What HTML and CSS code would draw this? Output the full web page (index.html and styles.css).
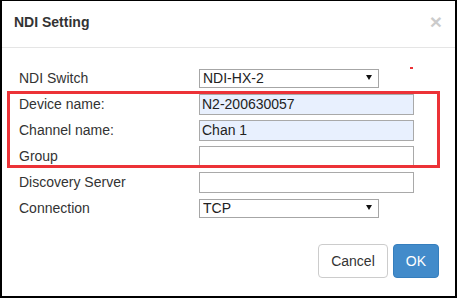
FILE: index.html
```html
<!DOCTYPE html>
<html>
<head>
<meta charset="utf-8">
<link rel="stylesheet" href="styles.css">
</head>
<body>
<div class="modal">
  <div class="modal-header">
    <button class="close" type="button">×</button>
    <h4 class="modal-title">NDI Setting</h4>
  </div>
  <div class="modal-body">
    <div class="form">
      <label class="lbl">NDI Switch</label>
      <div class="field"><div class="select-wrap"><select class="sel"><option>NDI-HX-2</option></select><span class="arrow"></span></div></div>
      <label class="lbl">Device name:</label>
      <div class="field"><input class="inp filled" type="text" value="N2-200630057"></div>
      <label class="lbl">Channel name:</label>
      <div class="field"><input class="inp filled" type="text" value="Chan 1"></div>
      <label class="lbl">Group</label>
      <div class="field"><input class="inp" type="text" value=""></div>
      <label class="lbl">Discovery Server</label>
      <div class="field"><input class="inp" type="text" value=""></div>
      <label class="lbl">Connection</label>
      <div class="field"><div class="select-wrap"><select class="sel"><option>TCP</option></select><span class="arrow"></span></div></div>
    </div>
  </div>
  <div class="modal-footer">
    <button class="btn btn-default" type="button">Cancel</button>
    <button class="btn btn-primary" type="button">OK</button>
  </div>
  <div class="highlight"></div>
  <div class="mark"></div>
</div>
</body>
</html>
```
FILE: styles.css
```css
html, body {
  margin: 0;
  padding: 0;
  background: #fff;
}
body {
  font-family: "Liberation Sans", Arial, sans-serif;
  font-size: 14px;
  color: #333;
}
.modal {
  position: relative;
  width: 457px;
  height: 298px;
  box-sizing: border-box;
  border: 2px solid #000;
  border-top-width: 1px;
  background: #fff;
}
.modal-header {
  padding: 11px 13px 15px 12px;
  border-bottom: 1px solid #e5e5e5;
  height: 20px;
}
.modal-title {
  margin: 0;
  font-size: 14px;
  font-weight: bold;
  line-height: 20px;
  color: #333;
}
.close {
  float: right;
  margin-top: -1px;
  padding: 0;
  border: 0;
  background: transparent;
  font-family: "Liberation Sans", Arial, sans-serif;
  font-size: 21px;
  font-weight: bold;
  line-height: 21px;
  color: #000;
  opacity: 0.2;
}
.modal-body {
  padding: 17px 0 8px 17px;
}
.form {
  display: grid;
  grid-template-columns: 180px 1fr;
  grid-auto-rows: 26px;
  align-items: center;
}
.lbl {
  line-height: 26px;
  color: #333;
}
.field {
  display: flex;
  align-items: center;
}
.inp {
  width: 215px;
  height: 21px;
  box-sizing: border-box;
  margin: 0;
  border: 1px solid #a9a9a9;
  padding: 0 2px;
  font-family: "Liberation Sans", Arial, sans-serif;
  font-size: 14px;
  color: #222;
  background: #fff;
  outline: none;
}
.inp.filled {
  background: #e8f0fe;
}
.select-wrap {
  position: relative;
  width: 180px;
  height: 19px;
}
.sel {
  -webkit-appearance: none;
  appearance: none;
  width: 180px;
  height: 19px;
  box-sizing: border-box;
  margin: 0;
  border: 1px solid #a6a6a6;
  border-radius: 0;
  padding: 0 3px;
  font-family: "Liberation Sans", Arial, sans-serif;
  font-size: 14px;
  line-height: 17px;
  color: #222;
  background: #fff;
}
.arrow {
  position: absolute;
  right: 7px;
  top: 6px;
  width: 0;
  height: 0;
  border-left: 3px solid transparent;
  border-right: 3px solid transparent;
  border-top: 5px solid #111;
  pointer-events: none;
}
.modal-footer {
  display: flex;
  justify-content: flex-end;
  gap: 5px;
  padding: 15px 16px 15px 15px;
}
.btn {
  height: 34px;
  box-sizing: border-box;
  padding: 6px 12px;
  border: 1px solid transparent;
  border-radius: 4px;
  font-family: "Liberation Sans", Arial, sans-serif;
  font-size: 14px;
  line-height: 20px;
}
.btn-default {
  background: #fff;
  border-color: #ccc;
  color: #333;
}
.btn-primary {
  background: #428bca;
  border-color: #357ebd;
  color: #fff;
}
.highlight {
  position: absolute;
  left: 5px;
  top: 90px;
  width: 433px;
  height: 77px;
  box-sizing: border-box;
  border: 3px solid #ec3237;
  pointer-events: none;
}
.mark {
  position: absolute;
  left: 408px;
  top: 66px;
  width: 3px;
  height: 2px;
  background: #ec3237;
}
```
